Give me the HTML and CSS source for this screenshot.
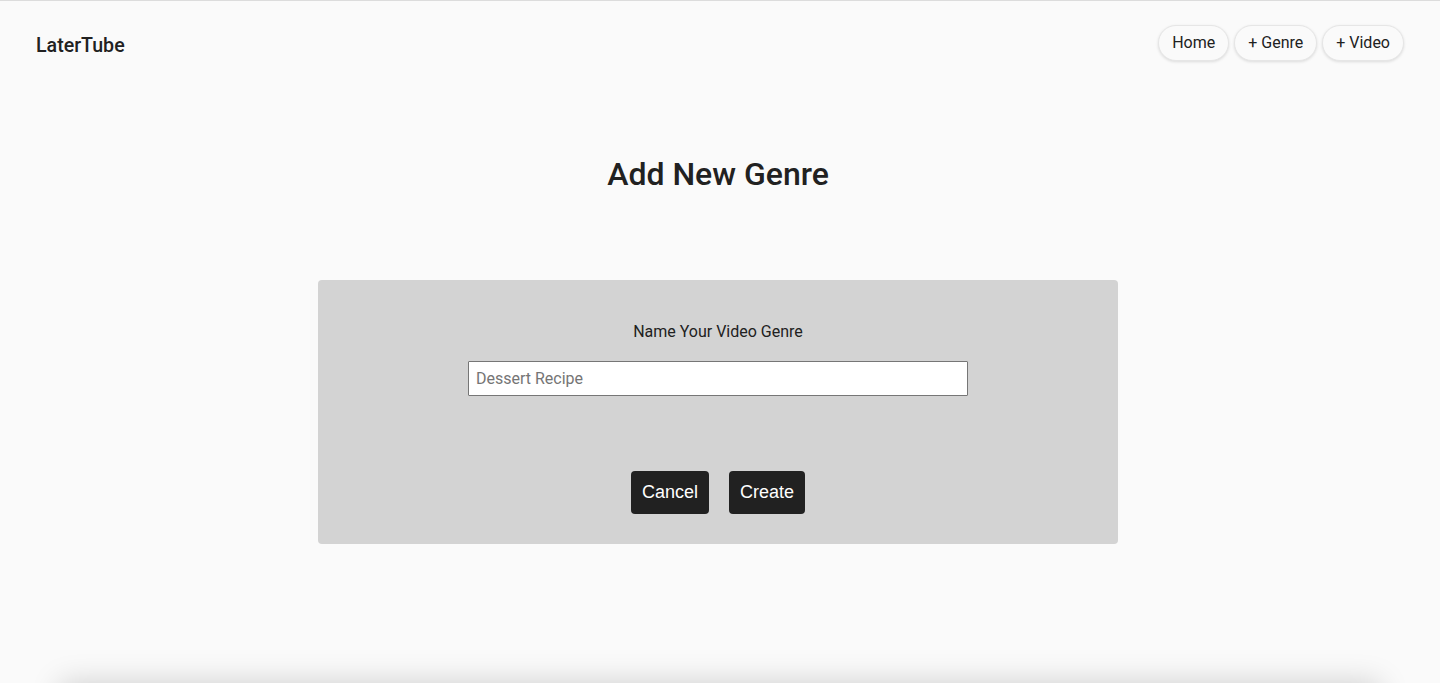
FILE: index.html
```html
<!DOCTYPE html>
<html lang="en">
<head>
<meta charset="utf-8">
<title>LaterTube</title>
<link rel="stylesheet" href="styles.css">
</head>
<body>
<div class="page">
  <header class="topbar">
    <div class="logo">LaterTube</div>
    <nav class="nav">
      <button class="nav-btn">Home</button>
      <button class="nav-btn">+ Genre</button>
      <button class="nav-btn">+ Video</button>
    </nav>
  </header>
  <main class="main">
    <h1 class="title">Add New Genre</h1>
    <form class="card">
      <label class="label" for="genre">Name Your Video Genre</label>
      <input class="input" id="genre" type="text" placeholder="Dessert Recipe">
      <div class="actions">
        <button type="button" class="action-btn">Cancel</button>
        <button type="button" class="action-btn">Create</button>
      </div>
    </form>
  </main>
</div>
<footer class="footer"></footer>
</body>
</html>
```
FILE: styles.css
```css
html, body {
  margin: 0;
  padding: 0;
  background: #fafafa;
}
body {
  font-family: Roboto, "Liberation Sans", sans-serif;
  color: #212121;
}
.page {
  min-height: 100vh;
  box-sizing: border-box;
  border-top: 1px solid #dcdcdc;
}
.topbar {
  display: flex;
  justify-content: space-between;
  align-items: flex-start;
  padding: 24px 36px 0 36px;
}
.logo {
  font-size: 19.6px;
  font-weight: 500;
  padding-top: 10px;
  line-height: 22px;
  color: #212121;
}
.nav {
  display: flex;
  gap: 5px;
}
.nav-btn {
  font-family: Roboto, "Liberation Sans", sans-serif;
  font-size: 16px;
  line-height: 18px;
  color: #212121;
  background: #fafafa;
  border: 1px solid #e6e6e6;
  border-radius: 18px;
  height: 36px;
  padding: 0 13px 1px 13px;
  box-shadow: 0 1px 3px rgba(0, 0, 0, 0.12);
  cursor: pointer;
}
.main {
  display: flex;
  flex-direction: column;
  align-items: center;
  padding-right: 4px;
}
.title {
  font-size: 32px;
  font-weight: 500;
  line-height: 38px;
  margin: 94px 0 0 0;
  color: #212121;
}
.card {
  margin-top: 87px;
  width: 800px;
  height: 264px;
  box-sizing: border-box;
  background: #d3d3d3;
  border-radius: 4px;
  display: flex;
  flex-direction: column;
  align-items: center;
  padding-top: 42px;
}
.label {
  font-size: 16px;
  line-height: 19px;
  color: #212121;
}
.input {
  margin-top: 20px;
  width: 500px;
  height: 35px;
  box-sizing: border-box;
  border: 1px solid #767676;
  border-radius: 1px;
  background: #fff;
  padding: 0 7px;
  font-family: Roboto, "Liberation Sans", sans-serif;
  font-size: 16px;
  color: #212121;
}
.input::placeholder {
  color: #757575;
}
.actions {
  margin-top: 75px;
  display: flex;
  gap: 20px;
}
.action-btn {
  font-family: "Liberation Sans", Arial, sans-serif;
  font-size: 18px;
  color: #fff;
  background: #212121;
  border: none;
  border-radius: 4px;
  height: 43px;
  padding: 0 11px;
  cursor: pointer;
}
.footer {
  margin: 0 60px;
  height: 60px;
  background: #fafafa;
  box-shadow: 0 0 30px rgba(0, 0, 0, 0.18);
}
```
